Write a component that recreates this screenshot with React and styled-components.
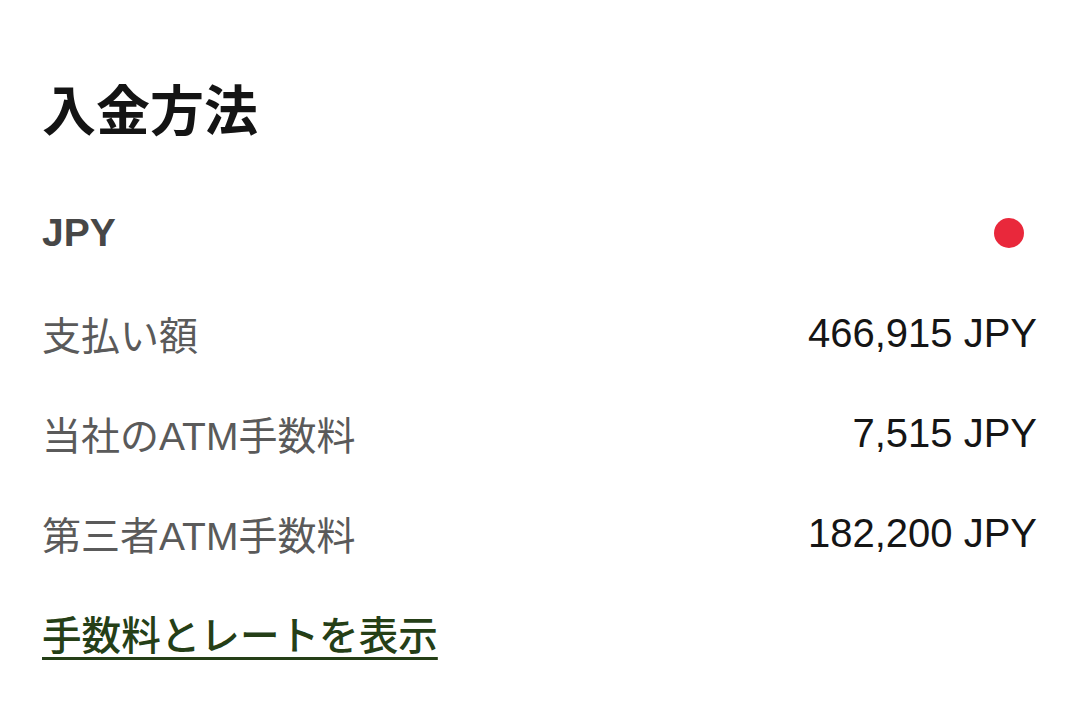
import styled, { createGlobalStyle } from 'styled-components';

const GlobalStyle = createGlobalStyle`
  html, body {
    margin: 0;
    padding: 0;
    background: #ffffff;
  }
  body {
    font-family: "Liberation Sans", "Noto Sans CJK JP", sans-serif;
  }
`;

const Wrapper = styled.section`
  width: 1080px;
  height: 711px;
  box-sizing: border-box;
  padding: 76px 43px 0 42px;
  background: #ffffff;
`;

const Title = styled.h1`
  margin: 0 0 43px 0;
  height: 64px;
  line-height: 64px;
  font-family: "Noto Sans CJK JP", sans-serif;
  font-size: 54px;
  font-weight: 700;
  color: #141414;
`;

const Row = styled.div`
  display: flex;
  align-items: center;
  justify-content: space-between;
  height: 100px;
`;

const Currency = styled.span`
  font-size: 39px;
  font-weight: 700;
  color: #474747;
`;

const Dot = styled.span`
  width: 30px;
  height: 30px;
  margin-right: 13px;
  border-radius: 50%;
  background: #e9283b;
`;

const Label = styled.span`
  font-size: 39px;
  color: #5a5a5a;
`;

const Value = styled.span`
  font-size: 40px;
  color: #151515;
`;

const LinkRow = styled.div`
  display: flex;
  align-items: center;
  height: 100px;
`;

const Link = styled.a`
  font-family: "Noto Sans CJK JP", sans-serif;
  font-size: 39.6px;
  font-weight: 500;
  line-height: 1.2;
  color: #253f17;
  text-decoration: underline;
  text-decoration-thickness: 3px;
  text-underline-offset: 7px;
  cursor: pointer;
`;

const fees = [
  { title: '支払い額', value: '466,915 JPY' },
  { title: '当社のATM手数料', value: '7,515 JPY' },
  { title: '第三者ATM手数料', value: '182,200 JPY' },
];

export default function App() {
  return (
    <>
      <GlobalStyle />
      <Wrapper>
        <Title>入金方法</Title>
        <Row>
          <Currency>JPY</Currency>
          <Dot />
        </Row>
        {fees.map(el => (
          <Row key={el.title}>
            <Label>{el.title}</Label>
            <Value>{el.value}</Value>
          </Row>
        ))}
        <LinkRow>
          <Link>手数料とレートを表示</Link>
        </LinkRow>
      </Wrapper>
    </>
  );
}
